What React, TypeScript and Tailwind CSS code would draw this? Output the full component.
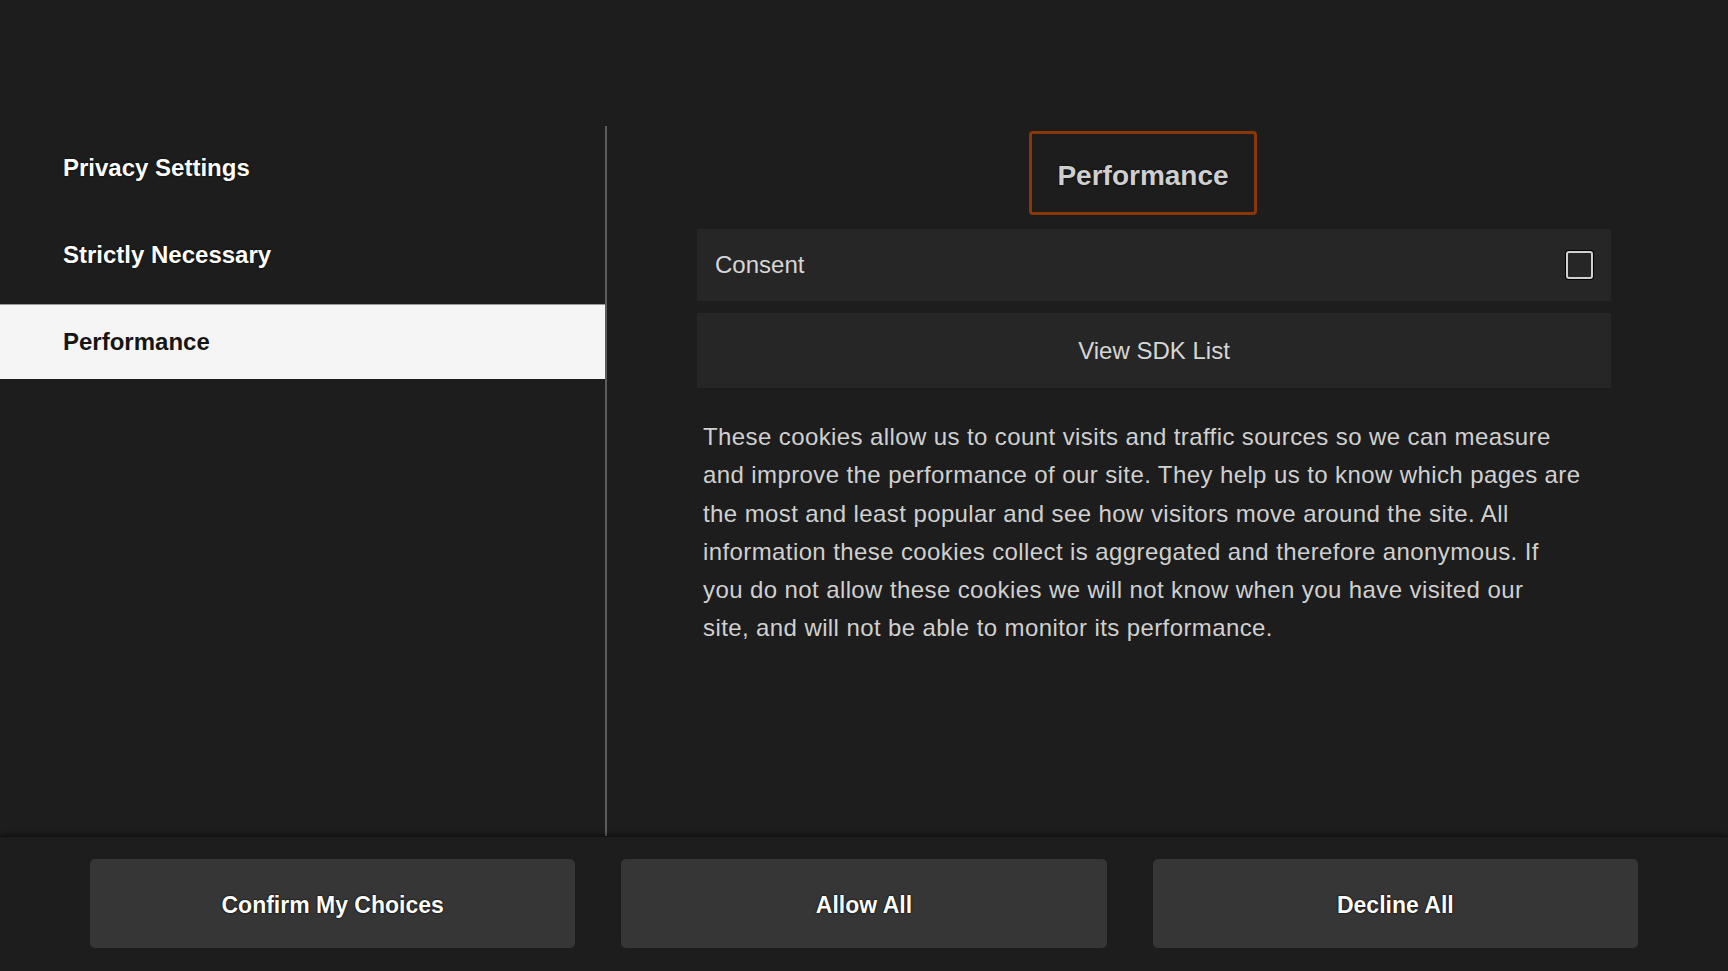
import React from "react";

const lines = [
  "These cookies allow us to count visits and traffic sources so we can measure",
  "and improve the performance of our site. They help us to know which pages are",
  "the most and least popular and see how visitors move around the site. All",
  "information these cookies collect is aggregated and therefore anonymous. If",
  "you do not allow these cookies we will not know when you have visited our",
  "site, and will not be able to monitor its performance.",
];

const navItems = ["Privacy Settings", "Strictly Necessary", "Performance"];

export default function App() {
  return (
    <div className="h-[971px] w-full bg-[#1d1d1d] flex flex-col overflow-hidden font-['Liberation_Sans',Arial,sans-serif]">
      <div className="flex-1 flex pt-[126px] min-h-0">
        <nav className="w-[607px] shrink-0 border-r-2 border-[#5c5c5c] pt-[4px] flex flex-col gap-[12px]">
          {navItems.map((item) => {
            const active = item === "Performance";
            return (
              <div
                key={item}
                className={
                  active
                    ? "h-[75px] flex items-center pl-[63px] bg-[#f5f5f5] text-[#151515] text-[24px] font-bold border-t border-[#9a9a9a]"
                    : "h-[75px] flex items-center pl-[63px] text-white text-[24px] font-bold [text-shadow:0_0_2px_#000]"
                }
              >
                {item}
              </div>
            );
          })}
        </nav>
        <section className="flex-1 pl-[90px] pt-[5px]">
          <div className="w-[914px] flex flex-col">
            <div className="pl-[332px]">
              <div className="w-[228px] h-[84px] pt-[5px] border-[3px] border-[#8a3809] rounded-[4px] flex items-center justify-center text-[28px] font-bold text-[#cfcfcf] [text-shadow:0_0_2px_#000]">
                Performance
              </div>
            </div>
            <div className="mt-[14px] h-[72px] bg-[#262626] flex items-center justify-between pl-[18px] pr-[18px]">
              <span className="text-[24px] text-[#d6d6d6]">Consent</span>
              <span className="w-[27px] h-[28px] border-2 border-[#d0d0d0] rounded-[3px] shadow-[0_0_0_1px_#000]" />
            </div>
            <div className="mt-[12px] h-[75px] bg-[#262626] flex items-center justify-center text-[24px] text-[#d6d6d6]">
              View SDK List
            </div>
            <p className="mt-[30px] pl-[6px] text-[24px] tracking-[0.4px] leading-[38.3px] text-[#d0d0d0]">
              {lines.map((l, i) => (
                <span key={i} className="block whitespace-nowrap">
                  {l}
                </span>
              ))}
            </p>
          </div>
        </section>
      </div>
      <footer className="h-[135px] shrink-0 bg-[#1d1d1d] border-t border-[#111111] shadow-[0_-2px_4px_rgba(0,0,0,0.35)] px-[90px] pt-[22px]">
        <div className="grid grid-cols-3 gap-[46px]">
          {["Confirm My Choices", "Allow All", "Decline All"].map((b) => (
            <button
              key={b}
              className="h-[89px] pt-[4px] bg-[#363636] rounded-[5px] text-white text-[23px] font-bold [text-shadow:0_0_2px_#000,0_0_1px_#000]"
            >
              {b}
            </button>
          ))}
        </div>
      </footer>
    </div>
  );
}
